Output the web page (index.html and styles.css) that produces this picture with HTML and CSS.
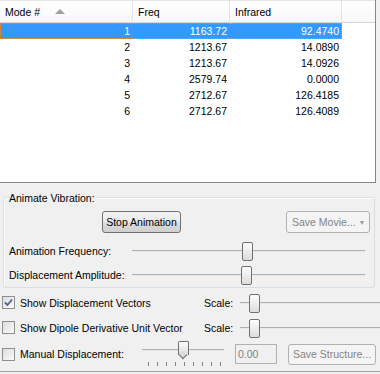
FILE: index.html
```html
<!DOCTYPE html>
<html lang="en">
<head>
    <meta charset="UTF-8">
    <title>Vibrations</title>
    <link rel="stylesheet" href="styles.css">
</head>
<body>

    <div class="list">
        <table class="modes">
            <thead>
                <tr>
                    <th class="col-mode">Mode # <span class="sort"></span></th>
                    <th class="col-freq">Freq</th>
                    <th class="col-ir">Infrared</th>
                    <th class="col-fill"></th>
                </tr>
            </thead>
            <tbody>
                <tr class="selected"><td>1</td><td>1163.72</td><td>92.4740</td><td class="blank"></td></tr>
                <tr><td>2</td><td>1213.67</td><td>14.0890</td><td class="blank"></td></tr>
                <tr><td>3</td><td>1213.67</td><td>14.0926</td><td class="blank"></td></tr>
                <tr><td>4</td><td>2579.74</td><td>0.0000</td><td class="blank"></td></tr>
                <tr><td>5</td><td>2712.67</td><td>126.4185</td><td class="blank"></td></tr>
                <tr><td>6</td><td>2712.67</td><td>126.4089</td><td class="blank"></td></tr>
            </tbody>
        </table>
    </div>

    <div class="group">
        <div class="group-title">Animate Vibration:</div>
        <div class="button-row">
            <button class="btn stop">Stop Animation</button>
            <button class="btn movie" disabled>Save Movie... <span class="drop">&#9660;</span></button>
        </div>
        <div class="slider-row first">
            <span class="label">Animation Frequency:</span>
            <div class="slider wide"><div class="track"></div><div class="thumb" style="left: 110px"></div></div>
        </div>
        <div class="slider-row">
            <span class="label">Displacement Amplitude:</span>
            <div class="slider wide"><div class="track"></div><div class="thumb" style="left: 109px"></div></div>
        </div>
    </div>

    <div class="options">
        <div class="opt-row">
            <span class="check checked">
                <svg width="9" height="9" viewBox="0 0 9 9"><path d="M1 4.5 L3.5 7 L8 1.5" fill="none" stroke="#4a5f97" stroke-width="1.8"/></svg>
            </span>
            <span class="opt-label">Show Displacement Vectors</span>
            <span class="scale">Scale:</span>
            <div class="slider scale-slider"><div class="track"></div><div class="thumb" style="left: 9px"></div></div>
        </div>
        <div class="opt-row">
            <span class="check"></span>
            <span class="opt-label">Show Dipole Derivative Unit Vector</span>
            <span class="scale">Scale:</span>
            <div class="slider scale-slider"><div class="track"></div><div class="thumb" style="left: 9px"></div></div>
        </div>
        <div class="opt-row manual">
            <span class="check"></span>
            <span class="opt-label short">Manual Displacement:</span>
            <div class="slider small">
                <div class="track"></div>
                <div class="thumb arrow" style="left: 36px"></div>
                <div class="ticks">
                    <i></i><i></i><i></i><i></i><i></i><i></i><i></i><i></i><i></i>
                </div>
            </div>
            <input class="num" type="text" value="0.00" disabled>
            <button class="btn structure" disabled>Save Structure...</button>
        </div>
    </div>

</body>
</html>
```

FILE: styles.css
```css
body {
    margin: 0;
    background: #f0f0f0;
    font-family: "Liberation Sans", Arial, sans-serif;
    font-size: 10.5px;
    color: #000;
    width: 380px;
    height: 374px;
    overflow: hidden;
}

.list {
    width: 376px;
    height: 183px;
    background: white;
    border-right: 1px solid #828790;
    border-bottom: 1px solid #828790;
    box-sizing: border-box;
}

.modes {
    border-collapse: separate;
    border-spacing: 0;
    table-layout: fixed;
    width: 375px;
}

.modes th {
    height: 21px;
    padding: 0 0 0 5px;
    text-align: left;
    font-weight: normal;
    background: linear-gradient(#ffffff, #f7f8fa);
    border-right: 1px solid #e3e5e8;
    border-bottom: 1px solid #d5d5d5;
    border-top: 1px solid #e3e5e8;
    white-space: nowrap;
}

.col-mode { width: 127px; }
.col-freq { width: 91px; }
.col-ir { width: 106px; }
.modes th.col-fill { border-right: none; }

.sort {
    display: inline-block;
    margin-left: 12px;
    width: 0;
    height: 0;
    border-left: 5px solid transparent;
    border-right: 5px solid transparent;
    border-bottom: 5px solid #a0a0a0;
    vertical-align: 2px;
}

.modes td {
    height: 16px;
    line-height: 16px;
    padding: 0 3px 0 0;
    text-align: right;
    white-space: nowrap;
    box-sizing: border-box;
}

.modes td.blank { background: white; }

.modes tr.selected td {
    background: #3399ff;
    color: white;
    line-height: 14px;
    border-top: 1px dotted #d99a4e;
    border-bottom: 1px dotted #d99a4e;
}

.modes tr.selected td:first-child { border-left: 1px dotted #d99a4e; }
.modes tr.selected td:nth-child(3) { border-right: 1px dotted #d99a4e; padding-right: 2px; }
.modes tr.selected td.blank { background: white; border: none; }

.group {
    margin: 14px 5px 0 3px;
    padding: 0 5px 5px 5px;
    height: 84px;
    border: 1px solid #d5dfe5;
    border-radius: 3px;
    box-shadow: inset 1px 1px 0 #fff;
}

.group-title {
    display: inline-block;
    margin-top: -6px;
    height: 13px;
    line-height: 13px;
    background: #f0f0f0;
    padding-right: 2px;
    vertical-align: top;
}

.button-row {
    display: flex;
    justify-content: space-between;
    padding: 1px 0 0 93px;
}

.btn {
    font-family: inherit;
    font-size: 10.5px;
    height: 22px;
    border: 1px solid #707070;
    border-radius: 3px;
    background: linear-gradient(#f2f2f2 0%, #ebebeb 50%, #dddddd 51%, #cfcfcf 100%);
    color: #000;
    padding: 0;
    white-space: nowrap;
}

.btn.stop { width: 79px; }

.btn[disabled] {
    border-color: #adb2b5;
    background: #f4f4f4;
    color: #838383;
}

.btn.movie {
    width: 84px;
    margin-right: -1px;
    padding: 0 2px 0 5px;
    text-align: left;
}

.drop {
    font-size: 7px;
    color: #a0a0a0;
    vertical-align: 1px;
}

.slider-row {
    display: flex;
    align-items: center;
    height: 24px;
}

.slider-row.first { margin-top: 6px; }

.label {
    flex: none;
    width: 123px;
}

.slider {
    position: relative;
    flex: none;
    height: 24px;
}

.track {
    position: absolute;
    left: 0;
    right: 0;
    top: 11px;
    height: 1px;
    background: #b0b0b0;
    border-bottom: 1px solid #e8e8e8;
}

.slider.wide { width: 233px; }

.thumb {
    position: absolute;
    top: 3px;
    width: 9px;
    height: 17px;
    border: 1px solid #707070;
    border-radius: 2px;
    background: linear-gradient(#fdfdfd, #ececec 50%, #dcdcdc);
}

.options {
    margin-top: 2px;
    height: 81px;
    border-bottom: 1px solid #a0a0a0;
}

.opt-row {
    display: flex;
    align-items: center;
    height: 25px;
    padding-left: 2px;
}

.opt-row.manual { height: 26px; margin-top: 1px; }

.check {
    flex: none;
    display: inline-flex;
    align-items: center;
    justify-content: center;
    width: 11px;
    height: 11px;
    border: 1px solid #8f8f8f;
    background: linear-gradient(135deg, #dcdcdc, #fbfbfb);
    margin-right: 5px;
}

.opt-label { flex: none; width: 184px; }
.opt-label.short { width: 122px; }

.scale { flex: none; width: 36px; }

.slider.scale-slider { width: 140px; }

.slider.small { width: 82px; height: 26px; }

.slider.small .track { top: 8px; }

.thumb.arrow {
    top: 0;
    height: 13px;
    border-radius: 2px 2px 0 0;
    border-bottom: none;
}

.thumb.arrow::after {
    content: "";
    position: absolute;
    left: 1px;
    top: 10px;
    width: 5px;
    height: 5px;
    border-right: 1px solid #707070;
    border-bottom: 1px solid #707070;
    background: #dcdcdc;
    transform: rotate(45deg);
}

.ticks {
    position: absolute;
    left: 6px;
    top: 21px;
    display: flex;
    gap: 8px;
}

.ticks i {
    display: block;
    width: 1px;
    height: 4px;
    background: #808080;
}

.num {
    flex: none;
    margin-left: 11px;
    width: 42px;
    height: 20px;
    box-sizing: border-box;
    padding: 1px 2px;
    border: 1px solid #adb2b5;
    background: #f0f0f0;
    color: #838383;
    font-family: inherit;
    font-size: 10.5px;
}

.btn.structure {
    flex: none;
    margin-left: 11px;
    width: 88px;
    height: 21px;
    padding: 0 3px;
}
```
